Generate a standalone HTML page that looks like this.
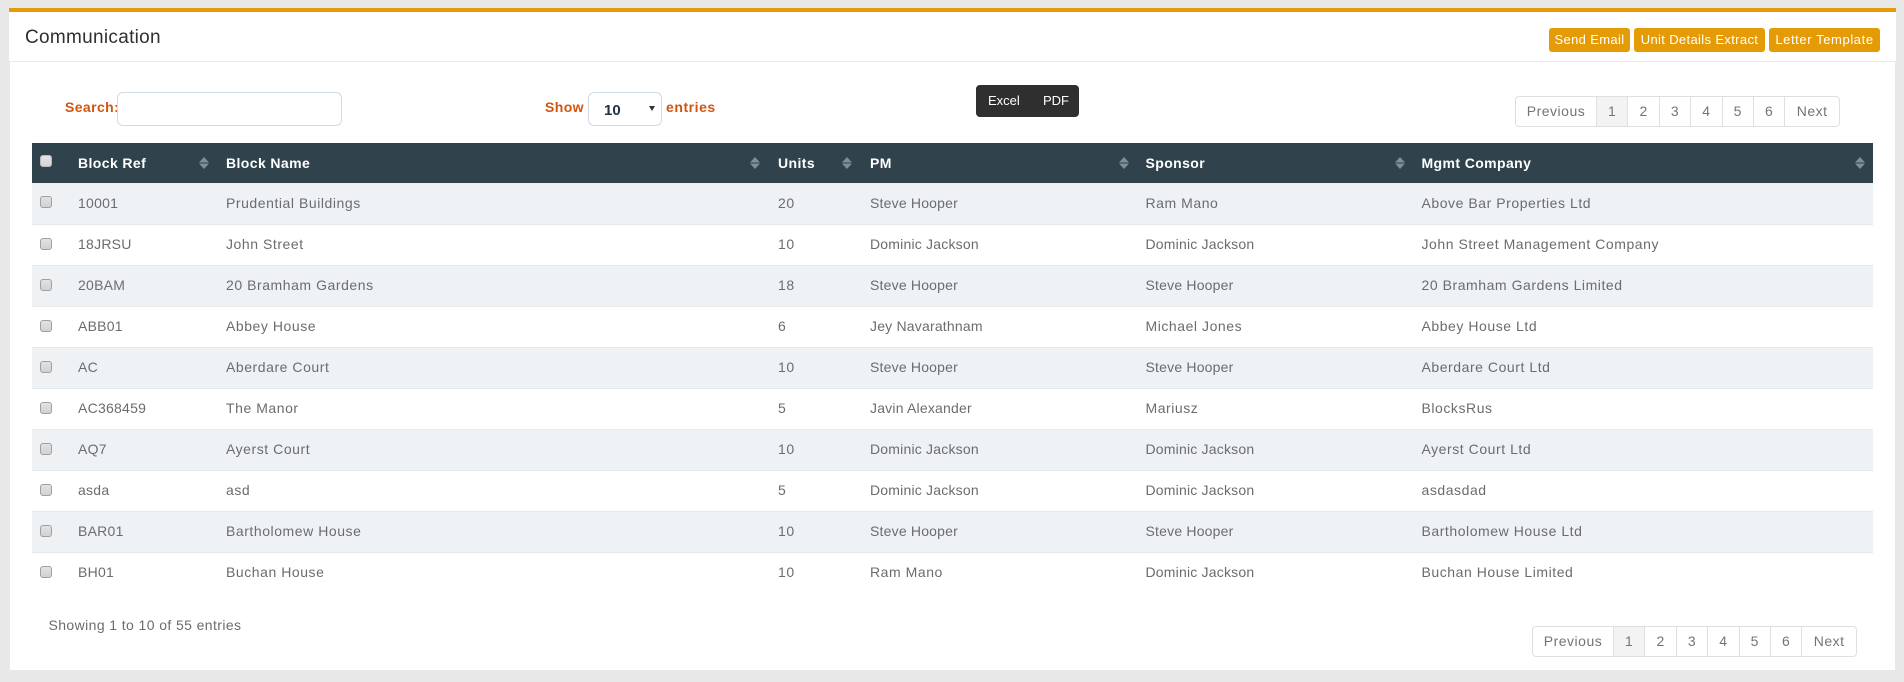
<!DOCTYPE html>
<html lang="en">
<head>
<meta charset="utf-8">
<title>Communication</title>
<style>
*{box-sizing:border-box}
html,body{margin:0;padding:0}
body{width:1904px;height:682px;background:#e8e8e8;position:relative;overflow:hidden;font-family:"Liberation Sans",Arial,sans-serif;font-size:14px;color:#6a6c6f}
.abs{position:absolute;white-space:nowrap}
#top{left:9px;top:8px;width:1887px;height:4px;background:#e59b05}
#head{left:9px;top:12px;width:1887px;height:50px;background:#fff;border-bottom:1px solid #e8eaec}
#body{left:10px;top:62px;width:1885px;height:608px;background:#fff}
#title{left:25px;top:26px;font-size:19px;line-height:24px;color:#2f2f2f;letter-spacing:.3px}
.btn{top:28px;height:24px;background:#e59b05;border-radius:3px;color:#fff;font-size:13px;line-height:24px;text-align:center;letter-spacing:.35px}
.lbl{font-weight:bold;color:#d3540f;font-size:14px;line-height:20px;letter-spacing:.4px}
#search{left:117px;top:92px;width:225px;height:34px;border:1px solid #d0d9e6;border-radius:6px;background:#fff}
#sel{left:588px;top:92px;width:74px;height:34px;border:1px solid #d0d9e6;border-radius:6px;background:#fff}
#sel b{position:absolute;left:15px;top:9px;font-size:15px;line-height:18px;color:#1e3346}
#sel i{position:absolute;left:60px;top:13px;width:0;height:0;border-left:3px solid transparent;border-right:3px solid transparent;border-top:5px solid #333}
#exp{left:976px;top:85px;width:103px;height:32px;background:#2f2f2f;border-radius:4px;color:#fff;font-size:13px;line-height:32px}
#exp span{position:absolute;top:0}
.pg{height:31px;display:flex;border:1px solid #dfdfdf;border-radius:4px;background:#fff;font-size:14px;letter-spacing:.5px;color:#727578}
.pg span{display:block;height:29px;line-height:29px;text-align:center;border-left:1px solid #dfdfdf}
.pg span:first-child{border-left:0;width:80px}
.pg span.n{width:31.4px}
.pg span.x{flex:1}
.pg span.on{background:#f3f3f3}
table{position:absolute;left:32px;top:143px;width:1841px;border-collapse:collapse;table-layout:fixed;font-size:14px;letter-spacing:.55px}
th{height:40px;background:#30434c;color:#fff;font-weight:bold;text-align:left;padding:0 0 0 8px;position:relative;letter-spacing:.4px}
td{height:41px;padding:0 0 0 8px;border-bottom:1px solid #e6e9ec;position:relative;white-space:nowrap;padding-bottom:1px}
td:nth-child(2){letter-spacing:.25px}
td.a{letter-spacing:.2px}
tr:nth-child(odd) td{background:#eff2f5}
tr:last-child td{border-bottom:0}
.cb{position:absolute;left:8px;top:13px;width:12px;height:12px;border:1px solid #a0a0a0;border-radius:3px;background:linear-gradient(#e2e2e2,#d2d2d2)}
th .cb{top:12px;background:linear-gradient(#e4e4e4,#d4d4d4);border-color:#b8bcbe}
th svg{position:absolute;top:14px;width:10px;height:12px}
</style>
</head>
<body>
<div class="abs" id="top"></div>
<div class="abs" id="head"></div>
<div class="abs" id="body"></div>
<div class="abs" id="title">Communication</div>
<div class="abs btn" style="left:1549px;width:81px">Send Email</div>
<div class="abs btn" style="left:1634px;width:131px">Unit Details Extract</div>
<div class="abs btn" style="left:1769px;width:111px;letter-spacing:.6px">Letter Template</div>

<div class="abs lbl" style="left:65px;top:97px">Search:</div>
<div class="abs" id="search"></div>
<div class="abs lbl" style="left:545px;top:97px">Show</div>
<div class="abs" id="sel"><b>10</b><i></i></div>
<div class="abs lbl" style="left:666px;top:97px;letter-spacing:.55px">entries</div>
<div class="abs" id="exp"><span style="left:12px">Excel</span><span style="left:67px">PDF</span></div>

<div class="abs pg" style="left:1515px;top:96px;width:325px"><span>Previous</span><span class="n on">1</span><span class="n">2</span><span class="n">3</span><span class="n">4</span><span class="n">5</span><span class="n">6</span><span class="x">Next</span></div>

<table>
<colgroup><col style="width:38px"><col style="width:148px"><col style="width:552px"><col style="width:92px"><col style="width:275.5px"><col style="width:276px"><col></colgroup>
<thead><tr>
<th><span class="cb"></span></th>
<th>Block Ref<svg style="left:129px" viewBox="0 0 10 12"><path fill="#7f8e93" d="M5 0L10 5.5H0ZM0 6.5H10L5 12Z"/></svg></th>
<th>Block Name<svg style="left:532px" viewBox="0 0 10 12"><path fill="#7f8e93" d="M5 0L10 5.5H0ZM0 6.5H10L5 12Z"/></svg></th>
<th>Units<svg style="left:72px" viewBox="0 0 10 12"><path fill="#7f8e93" d="M5 0L10 5.5H0ZM0 6.5H10L5 12Z"/></svg></th>
<th>PM<svg style="left:257px" viewBox="0 0 10 12"><path fill="#7f8e93" d="M5 0L10 5.5H0ZM0 6.5H10L5 12Z"/></svg></th>
<th>Sponsor<svg style="left:257px" viewBox="0 0 10 12"><path fill="#7f8e93" d="M5 0L10 5.5H0ZM0 6.5H10L5 12Z"/></svg></th>
<th>Mgmt Company<svg style="left:441px" viewBox="0 0 10 12"><path fill="#7f8e93" d="M5 0L10 5.5H0ZM0 6.5H10L5 12Z"/></svg></th>
</tr></thead>
<tbody>
<tr><td><span class="cb"></span></td><td>10001</td><td>Prudential Buildings</td><td>20</td><td class="a">Steve Hooper</td><td>Ram Mano</td><td>Above Bar Properties Ltd</td></tr>
<tr><td><span class="cb"></span></td><td>18JRSU</td><td>John Street</td><td>10</td><td class="a">Dominic Jackson</td><td class="a">Dominic Jackson</td><td>John Street Management Company</td></tr>
<tr><td><span class="cb"></span></td><td>20BAM</td><td>20 Bramham Gardens</td><td>18</td><td class="a">Steve Hooper</td><td class="a">Steve Hooper</td><td>20 Bramham Gardens Limited</td></tr>
<tr><td><span class="cb"></span></td><td>ABB01</td><td>Abbey House</td><td>6</td><td class="a">Jey Navarathnam</td><td>Michael Jones</td><td>Abbey House Ltd</td></tr>
<tr><td><span class="cb"></span></td><td>AC</td><td>Aberdare Court</td><td>10</td><td class="a">Steve Hooper</td><td class="a">Steve Hooper</td><td>Aberdare Court Ltd</td></tr>
<tr><td><span class="cb"></span></td><td>AC368459</td><td>The Manor</td><td>5</td><td class="a">Javin Alexander</td><td>Mariusz</td><td>BlocksRus</td></tr>
<tr><td><span class="cb"></span></td><td>AQ7</td><td>Ayerst Court</td><td>10</td><td class="a">Dominic Jackson</td><td class="a">Dominic Jackson</td><td>Ayerst Court Ltd</td></tr>
<tr><td><span class="cb"></span></td><td>asda</td><td>asd</td><td>5</td><td class="a">Dominic Jackson</td><td class="a">Dominic Jackson</td><td>asdasdad</td></tr>
<tr><td><span class="cb"></span></td><td>BAR01</td><td>Bartholomew House</td><td>10</td><td class="a">Steve Hooper</td><td class="a">Steve Hooper</td><td>Bartholomew House Ltd</td></tr>
<tr><td><span class="cb"></span></td><td>BH01</td><td>Buchan House</td><td>10</td><td>Ram Mano</td><td class="a">Dominic Jackson</td><td>Buchan House Limited</td></tr>
</tbody>
</table>

<div class="abs" style="left:48.5px;top:615px;line-height:20px;letter-spacing:.4px">Showing 1 to 10 of 55 entries</div>
<div class="abs pg" style="left:1532px;top:626px;width:325px"><span>Previous</span><span class="n on">1</span><span class="n">2</span><span class="n">3</span><span class="n">4</span><span class="n">5</span><span class="n">6</span><span class="x">Next</span></div>
</body>
</html>
